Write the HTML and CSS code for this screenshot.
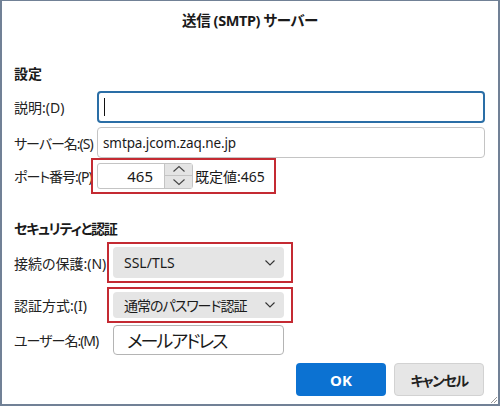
FILE: index.html
```html
<!DOCTYPE html>
<html lang="ja">
<head>
<meta charset="utf-8">
<title>送信 (SMTP) サーバー</title>
<link rel="stylesheet" href="styles.css">
</head>
<body>
<div class="frame">
  <div class="title">送信 (SMTP) サーバー</div>

  <div class="heading h1">設定</div>

  <div class="row r-desc">
    <label class="label l1">説明:(D)</label>
    <div class="input focus wide"><span class="caret"></span></div>
  </div>
  <div class="row r-server">
    <label class="label l1 kana">サーバー名:(S)</label>
    <div class="input wide server">smtpa.jcom.zaq.ne.jp</div>
  </div>
  <div class="row r-port">
    <label class="label l1 kana">ポート番号:(P)</label>
    <div class="mark mark-port">
      <div class="spin">
        <div class="spin-value">465</div>
        <div class="spin-btns">
          <div class="spin-btn up"><svg width="14" height="8" viewBox="0 0 14 8"><path d="M1.5 6.5 L7 1.5 L12.5 6.5" fill="none" stroke="#444" stroke-width="1.1"/></svg></div>
          <div class="spin-btn down"><svg width="14" height="8" viewBox="0 0 14 8"><path d="M1.5 1.5 L7 6.5 L12.5 1.5" fill="none" stroke="#444" stroke-width="1.1"/></svg></div>
        </div>
      </div>
      <span class="default">既定値:465</span>
    </div>
  </div>

  <div class="heading h2 kana-head">セキュリティと認証</div>

  <div class="row r-conn">
    <label class="label l2">接続の保護:(N)</label>
    <div class="mark mark-conn">
      <div class="select s-conn"><span>SSL/TLS</span>
        <svg class="chev" width="12" height="8" viewBox="0 0 12 8"><path d="M1.5 1.5 L6 6 L10.5 1.5" fill="none" stroke="#333" stroke-width="1.1"/></svg>
      </div>
    </div>
  </div>
  <div class="row r-auth">
    <label class="label l2">認証方式:(I)</label>
    <div class="mark mark-auth">
      <div class="select s-auth"><span class="kana">通常のパスワード認証</span>
        <svg class="chev" width="12" height="8" viewBox="0 0 12 8"><path d="M1.5 1.5 L6 6 L10.5 1.5" fill="none" stroke="#333" stroke-width="1.1"/></svg>
      </div>
    </div>
  </div>
  <div class="row r-user">
    <label class="label l2 kana">ユーザー名:(M)</label>
    <div class="input user">メールアドレス</div>
  </div>

  <div class="buttons">
    <div class="btn ok">OK</div>
    <div class="btn cancel">キャンセル</div>
  </div>
  <svg class="grip" width="10" height="10" viewBox="0 0 10 10"><path d="M9 3 L3 9 M9 6 L6 9" stroke="#999" stroke-width="1"/></svg>
</div>
</body>
</html>
```

FILE: styles.css
```css
* { box-sizing: border-box; }
html, body { margin: 0; padding: 0; background: #fff; }
body {
  font-family: "Noto Sans", "Noto Sans CJK JP", sans-serif;
  font-feature-settings: "palt";
  color: #1a1a1a;
}
.frame {
  position: relative;
  width: 500px;
  height: 406px;
  border: 2px solid #718196;
  border-top-width: 1px;
  padding: 0 14px 0 12px;
  display: flex;
  flex-direction: column;
  background: #fff;
  overflow: hidden;
}
.title {
  height: 38px;
  line-height: 38px;
  text-align: center;
  font-weight: 700;
  font-size: 14.5px;
  letter-spacing: -0.4px;
  padding-left: 2px;
}
.heading {
  height: 20px;
  line-height: 20px;
  font-size: 14px;
  font-weight: 700;
}
.kana-head { letter-spacing: -1.2px; }
.h1 { margin-top: 25px; }
.h2 { margin-top: 25px; }
.row {
  display: flex;
  align-items: center;
}
.label {
  flex: none;
  font-size: 14px;
  white-space: nowrap;
  overflow: hidden;
  color: #222;
}
.kana { letter-spacing: -1px; }
.l1 { width: 83px; }
.l2 { width: 99px; }
.r-desc { margin-top: 7px; }
.r-server { margin-top: 4px; }
.input {
  flex: none;
  border: 1px solid #c4c4c4;
  border-radius: 4px;
  background: #fff;
  display: flex;
  align-items: center;
  font-size: 14px;
}
.wide { width: 388px; }
.focus {
  height: 32px;
  border: 2px solid #2a6ea6;
  padding-left: 5px;
}
.caret {
  display: block;
  width: 1px;
  height: 18px;
  background: #111;
}
.server {
  height: 31px;
  padding-left: 5px;
  font-size: 13.5px;
  letter-spacing: -0.1px;
}
.mark {
  flex: none;
  border: 2px solid #c42a32;
  margin-left: -6px;
  display: flex;
  align-items: center;
}
.mark-port {
  height: 36px;
  padding: 3px 9px 4px 4px;
}
.spin {
  width: 96px;
  height: 26px;
  border: 1px solid #c4c4c4;
  border-radius: 3px;
  display: flex;
  background: #fff;
}
.spin-value {
  flex: 1;
  text-align: right;
  padding-right: 11px;
  font-size: 15px;
  line-height: 24px;
}
.spin-btns {
  width: 28px;
  display: flex;
  flex-direction: column;
  border-left: 1px solid #c4c4c4;
}
.spin-btn {
  flex: 1;
  background: #e4e4e4;
  display: flex;
  align-items: center;
  justify-content: center;
}
.spin-btn.up { border-bottom: 1px solid #c4c4c4; }
.default {
  margin-left: 2px;
  font-size: 14px;
  white-space: nowrap;
}
.r-conn { margin-top: 3px; }
.mark-conn {
  height: 41px;
  padding: 3px 0 3px 4px;
  width: 186px;
}
.r-auth { margin-top: 4px; }
.mark-auth {
  height: 36px;
  padding: 3px 0 3px 4px;
  width: 186px;
}
.select {
  width: 171px;
  background: #e5e5e5;
  border-radius: 4px;
  display: flex;
  align-items: center;
  justify-content: space-between;
  padding: 0 8px 0 11px;
  font-size: 14px;
}
.s-conn { height: 31px; }
.s-auth { height: 26px; }
.chev { flex: none; }
.r-user { margin-top: 2px; }
.user {
  width: 171px;
  height: 30px;
  border-color: #b4b4b4;
  padding-left: 13px;
  font-size: 18px;
  letter-spacing: -2px;
}
.buttons {
  margin-top: 8px;
  display: flex;
  justify-content: flex-end;
  gap: 8px;
}
.btn {
  width: 90px;
  height: 33px;
  border-radius: 4px;
  display: flex;
  align-items: center;
  justify-content: center;
  font-size: 15px;
  font-weight: 700;
}
.ok {
  background: #0c72d2;
  color: #fff;
}
.cancel {
  background: #e6e6e6;
  border: 1px solid #d2d2d2;
  color: #222;
  font-size: 14px;
  letter-spacing: -1.5px;
}
.grip {
  position: absolute;
  right: 0;
  bottom: 0;
}
```
